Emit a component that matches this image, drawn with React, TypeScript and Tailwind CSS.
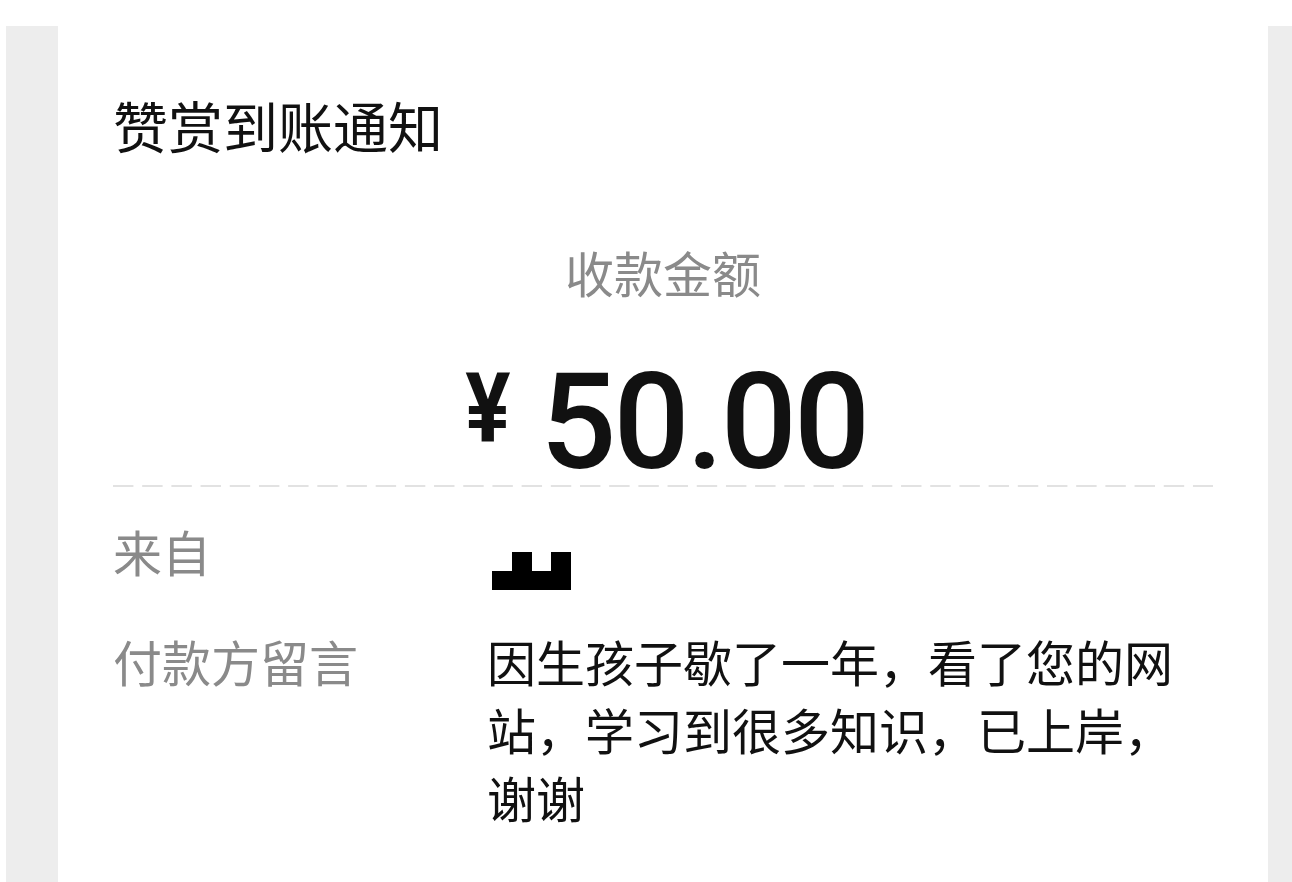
import React from "react";

const cjk = { fontFamily: '"Noto Sans CJK SC", "Noto Sans", sans-serif' };

export default function App() {
  return (
    <div className="w-[1292px] h-[882px] bg-white pt-[26px] flex overflow-hidden" style={cjk}>
      <div className="w-[6px] shrink-0 bg-white" />
      <div className="w-[52px] shrink-0 bg-[#ededed]" />
      <div className="w-[1210px] shrink-0 bg-white px-[55px] flex flex-col">
        <div className="mt-[71px] text-[55px] leading-none text-[#111]">赞赏到账通知</div>
        <div className="mt-[95px] text-center text-[49px] leading-none text-[#8a8a8a]">收款金额</div>
        <div className="mt-[60px] h-[129px] flex justify-center items-start" style={{ fontFamily: 'Roboto, "Liberation Sans", sans-serif' }}>
          <span className="text-[96px] leading-none font-bold text-[#111] scale-x-[0.88] origin-right mr-[30px] mt-[4px]">¥</span>
          <span className="text-[134px] leading-none font-medium text-[#111] tracking-[-3px]">50.00</span>
        </div>
        <div className="h-[2px] w-full bg-[linear-gradient(to_right,#e2e2e2_20px,transparent_20px)] bg-[length:29.2px_2px]" />
        <div className="mt-[39px] flex items-start">
          <div className="w-[374px] shrink-0 text-[49px] leading-none text-[#8a8a8a]">来自</div>
          <div className="relative ml-[5px] w-[80px] h-[38px] mt-[26px]">
            <div className="absolute left-0 bottom-0 w-[79px] h-[19px] bg-black" />
            <div className="absolute left-[20px] top-0 w-[20px] h-[19px] bg-black" />
            <div className="absolute left-[59px] top-0 w-[20px] h-[19px] bg-black" />
          </div>
        </div>
        <div className="mt-[46px] flex items-start">
          <div className="w-[374px] shrink-0 text-[49px] leading-none text-[#8a8a8a]">付款方留言</div>
          <div className="text-[49px] leading-[68px] text-[#111] -mt-[9px]">
            因生孩子歇了一年，看了您的网<br />站，学习到很多知识，已上岸，<br />谢谢
          </div>
        </div>
      </div>
      <div className="flex-1 bg-[#ededed]" />
    </div>
  );
}
